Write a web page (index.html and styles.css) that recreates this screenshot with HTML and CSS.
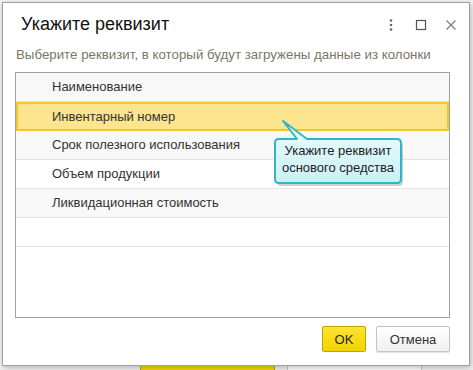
FILE: index.html
```html
<!DOCTYPE html>
<html lang="ru">
<head>
    <meta charset="UTF-8">
    <title>Укажите реквизит</title>
    <link rel="stylesheet" href="styles.css">
</head>
<body>
    <div class="dialog">
        <!-- Header -->
        <div class="dialog-header">
            <h2 class="dialog-title">Укажите реквизит</h2>
            <div class="header-icons">
                <svg class="icon" width="12" height="12" viewBox="0 0 12 12">
                    <circle cx="6" cy="1.5" r="1.3" fill="#666"/>
                    <circle cx="6" cy="6" r="1.3" fill="#666"/>
                    <circle cx="6" cy="10.5" r="1.3" fill="#666"/>
                </svg>
                <svg class="icon" width="12" height="12" viewBox="0 0 12 12">
                    <rect x="1.5" y="1.5" width="9" height="9" fill="none" stroke="#555" stroke-width="1.2"/>
                </svg>
                <svg class="icon" width="12" height="12" viewBox="0 0 12 12">
                    <path d="M1.5 1.5 L10.5 10.5 M10.5 1.5 L1.5 10.5" stroke="#777" stroke-width="1.1"/>
                </svg>
            </div>
        </div>

        <p class="hint">Выберите реквизит, в который будут загружены данные из колонки</p>

        <!-- List of attributes -->
        <div class="list">
            <div class="list-row odd">Наименование</div>
            <div class="list-row selected">Инвентарный номер</div>
            <div class="list-row odd">Срок полезного использования</div>
            <div class="list-row">Объем продукции</div>
            <div class="list-row odd">Ликвидационная стоимость</div>
            <div class="list-row"></div>
        </div>

        <div class="dialog-footer">
            <button class="btn btn-ok">OK</button>
            <button class="btn btn-cancel">Отмена</button>
        </div>

        <!-- Callout -->
        <div class="callout">
            <svg class="callout-shape" width="140" height="75" viewBox="0 0 140 75">
                <defs>
                    <linearGradient id="cg" x1="0" y1="0" x2="0" y2="1">
                        <stop offset="0" stop-color="#eefcfd"/>
                        <stop offset="1" stop-color="#c9f1f6"/>
                    </linearGradient>
                </defs>
                <path d="M9 21 H27 L13 3 L37 21 H127 Q131 21 131 25 V61 Q131 65 127 65 H9 Q5 65 5 61 V25 Q5 21 9 21 Z"
                      fill="rgba(0,0,0,0.18)" transform="translate(2,3)"/>
                <path d="M9 21 H27 L13 3 L37 21 H127 Q131 21 131 25 V61 Q131 65 127 65 H9 Q5 65 5 61 V25 Q5 21 9 21 Z"
                      fill="url(#cg)" stroke="#33b5c5" stroke-width="2" stroke-linejoin="round"/>
            </svg>
            <div class="callout-text">Укажите реквизит<br>основого средства</div>
        </div>
    </div>

    <!-- Parts of the form behind the dialog -->
    <div class="behind">
        <span class="behind-btn yellow">Записать 3 из 5</span>
        <span class="behind-btn">Закрыть</span>
    </div>
</body>
</html>
```

FILE: styles.css
```css
body {
    margin: 0;
    font-family: Arial, "Liberation Sans", sans-serif;
    background-color: #f2f2f2;
    overflow: hidden;
    height: 370px;
}
.dialog {
    position: relative;
    margin: 2px 0 0 2px;
    width: 468px;
    height: 364px;
    box-sizing: border-box;
    background: #fff;
    border: 1px solid #a0a0a0;
    box-shadow: 1px 2px 6px rgba(0, 0, 0, 0.25);
    padding: 0 19px 0 12px;
}
.dialog-header {
    display: flex;
    align-items: center;
    height: 42px;
    box-sizing: border-box;
    padding: 1px 0 0 6px;
}
.dialog-title {
    flex: 1;
    margin: 0;
    font-size: 18px;
    font-weight: normal;
    color: #111;
}
.header-icons {
    display: flex;
    gap: 18px;
    margin-right: -7px;
}
.icon {
    display: block;
}
.hint {
    margin: 0 0 0 1px;
    padding-top: 2px;
    height: 25px;
    font-size: 13.3px;
    color: #7b7668;
    line-height: 16px;
}
.list {
    height: 246px;
    box-sizing: border-box;
    border: 1px solid #a0a0a0;
}
.list-row {
    height: 29px;
    box-sizing: border-box;
    border-bottom: 1px solid #e4e4e4;
    padding-left: 36px;
    font-size: 13px;
    line-height: 28px;
    color: #333;
}
.list-row.odd {
    background-color: #f8f8f8;
}
.list-row.selected {
    background-color: #fde48e;
    border: 2px solid #f5c52a;
    padding-left: 34px;
    line-height: 25px;
}
.dialog-footer {
    display: flex;
    justify-content: flex-end;
    gap: 10px;
    margin-top: 8px;
}
.btn {
    height: 26px;
    box-sizing: border-box;
    font-family: Arial, "Liberation Sans", sans-serif;
    font-size: 13px;
    border-radius: 2px;
    padding: 0;
    color: #333;
}
.btn-ok {
    width: 44px;
    background: linear-gradient(#fde233, #f2d400);
    border: 1px solid #bfa300;
    color: #222;
}
.btn-cancel {
    width: 74px;
    background: linear-gradient(#ffffff, #f0f0f0);
    border: 1px solid #c4c4c4;
    box-shadow: 0 1px 1px rgba(0, 0, 0, 0.12);
}
.callout {
    position: absolute;
    left: 267px;
    top: 115px;
    width: 140px;
    height: 75px;
}
.callout-shape {
    position: absolute;
    left: 0;
    top: 0;
}
.callout-text {
    position: absolute;
    left: 5px;
    top: 24px;
    width: 126px;
    text-align: center;
    font-size: 13px;
    line-height: 17px;
    color: #222;
}
.behind {
    display: flex;
    gap: 12px;
    padding-left: 140px;
    margin-top: -1px;
}
.behind-btn {
    display: inline-block;
    width: 135px;
    height: 20px;
    box-sizing: border-box;
    border: 1px solid #c8c8c8;
    background: #fff;
    font-size: 13px;
    text-align: center;
    line-height: 20px;
    color: #444;
}
.behind-btn.yellow {
    background: #f5d90a;
    border-color: #c2a800;
}
```
